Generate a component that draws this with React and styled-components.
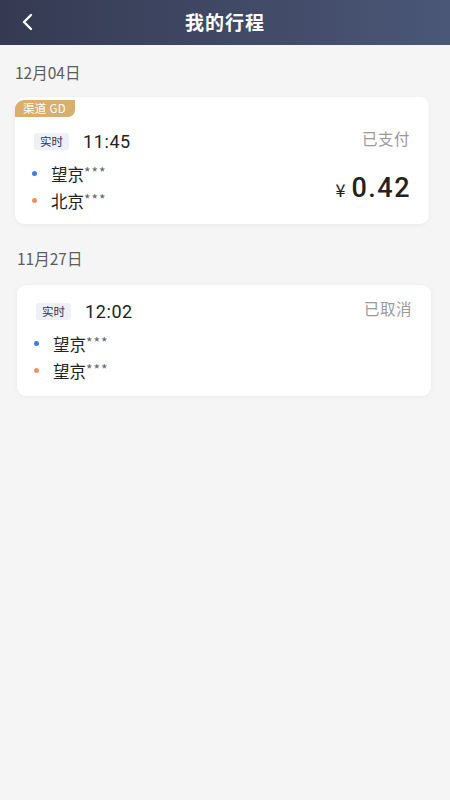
import styled, { createGlobalStyle } from "styled-components";

const GlobalStyle = createGlobalStyle`
  html, body {
    margin: 0;
    padding: 0;
    background: #f5f5f5;
  }
  body {
    font-family: "Noto Sans CJK SC", "Noto Sans", sans-serif;
  }
`;

const Page = styled.div`
  width: 450px;
  min-height: 800px;
  background: #f5f5f5;
`;

const Header = styled.div`
  height: 45px;
  display: flex;
  align-items: center;
  justify-content: center;
  position: relative;
  background: linear-gradient(90deg, #353a52 0%, #414a66 55%, #4b5777 100%);
  color: #fff;
`;

const Back = styled.div`
  position: absolute;
  left: 20px;
  top: 13px;
  width: 16px;
  height: 18px;
  display: flex;
`;

const Title = styled.h1`
  margin: 0;
  font-size: 19px;
  font-weight: 700;
  letter-spacing: 1px;
  margin-top: -3px;
`;

const Content = styled.div`
  padding: 0 21px 0 15px;
`;

const Group = styled.section`
  & + & {
    margin-top: 7px;
  }
`;

const DateLabel = styled.div`
  font-size: 15.5px;
  color: #5c5c5c;
  padding: 17px 0 ${(p) => (p.$indent ? 17 : 15)}px ${(p) => p.$indent || 0}px;
  line-height: 20px;
`;

const Card = styled.div`
  position: relative;
  background: #fff;
  border-radius: 9px;
  box-shadow: 0 1px 4px rgba(0, 0, 0, 0.05);
  margin-left: ${(p) => p.$indent || 0}px;
  margin-right: ${(p) => -(p.$indent || 0)}px;
  padding: ${(p) => (p.$tag ? 33 : 15)}px 19px ${(p) => (p.$tag ? 13 : 15)}px 19px;
`;

const Channel = styled.div`
  position: absolute;
  left: 0;
  top: 3px;
  height: 17px;
  padding: 0 9px 0 8px;
  background: #d9ae6f;
  color: #fff;
  font-size: 11.5px;
  line-height: 17px;
  letter-spacing: 0.3px;
  border-radius: 9px 0 7px 0;
`;

const TopRow = styled.div`
  display: flex;
  align-items: center;
  justify-content: space-between;
  height: 22px;
`;

const TimeGroup = styled.div`
  display: flex;
  align-items: center;
  gap: 14px;
`;

const Badge = styled.span`
  background: #edf0f8;
  color: #2e3450;
  font-size: 11.5px;
  line-height: 17px;
  padding: 0 6px;
  border-radius: 3px;
`;

const Time = styled.span`
  font-family: "Roboto", "Noto Sans", sans-serif;
  font-size: 18px;
  color: #222;
  letter-spacing: 0.6px;
`;

const Status = styled.span`
  font-size: 15.5px;
  color: #9a9a9a;
  letter-spacing: 0.5px;
  margin-top: -6px;
`;

const Body = styled.div`
  display: flex;
  align-items: flex-end;
  justify-content: space-between;
  margin-top: 10px;
`;

const Stops = styled.div`
  display: flex;
  flex-direction: column;
  gap: 5px;
`;

const Stop = styled.div`
  display: flex;
  align-items: center;
  gap: 14px;
  font-size: 16.5px;
  color: #222;
  line-height: 20px;
`;

const Dot = styled.span`
  width: 5px;
  height: 5px;
  border-radius: 50%;
  background: ${(p) => p.$color};
  margin-left: -2px;
`;

const Stars = styled.span`
  color: #666;
  font-size: 14px;
  letter-spacing: 1px;
  vertical-align: 3px;
`;

const Price = styled.div`
  display: flex;
  align-items: baseline;
  gap: 6px;
  color: #222;
  margin-bottom: 7px;
`;

const Yen = styled.span`
  font-size: 18px;
`;

const Amount = styled.span`
  font-family: "Roboto", "Noto Sans", sans-serif;
  font-size: 27px;
  font-weight: 500;
  letter-spacing: 1.5px;
  margin-right: -1px;
`;

const trips = [
  {
    date: "12月04日",
    indent: 0,
    tag: "渠道 GD",
    time: "11:45",
    status: "已支付",
    from: "望京",
    to: "北京",
    price: "0.42",
  },
  {
    date: "11月27日",
    indent: 2,
    time: "12:02",
    status: "已取消",
    from: "望京",
    to: "望京",
  },
];

const Chevron = () => (
  <svg width="16" height="18" viewBox="0 0 16 18">
    <path
      d="M11 2 L4 9 L11 16"
      fill="none"
      stroke="#fff"
      strokeWidth="2.4"
      strokeLinecap="round"
      strokeLinejoin="round"
    />
  </svg>
);

export default function App() {
  return (
    <Page>
      <GlobalStyle />
      <Header>
        <Back>
          <Chevron />
        </Back>
        <Title>我的行程</Title>
      </Header>
      <Content>
        {trips.map((t) => (
          <Group key={t.date}>
            <DateLabel $indent={t.indent}>{t.date}</DateLabel>
            <Card $indent={t.indent} $tag={!!t.tag}>
              {t.tag && <Channel>{t.tag}</Channel>}
              <TopRow>
                <TimeGroup>
                  <Badge>实时</Badge>
                  <Time>{t.time}</Time>
                </TimeGroup>
                <Status>{t.status}</Status>
              </TopRow>
              <Body>
                <Stops>
                  <Stop>
                    <Dot $color="#3d7ee6" />
                    <span>
                      {t.from}
                      <Stars>***</Stars>
                    </span>
                  </Stop>
                  <Stop>
                    <Dot $color="#f0935c" />
                    <span>
                      {t.to}
                      <Stars>***</Stars>
                    </span>
                  </Stop>
                </Stops>
                {t.price && (
                  <Price>
                    <Yen>¥</Yen>
                    <Amount>{t.price}</Amount>
                  </Price>
                )}
              </Body>
            </Card>
          </Group>
        ))}
      </Content>
    </Page>
  );
}
